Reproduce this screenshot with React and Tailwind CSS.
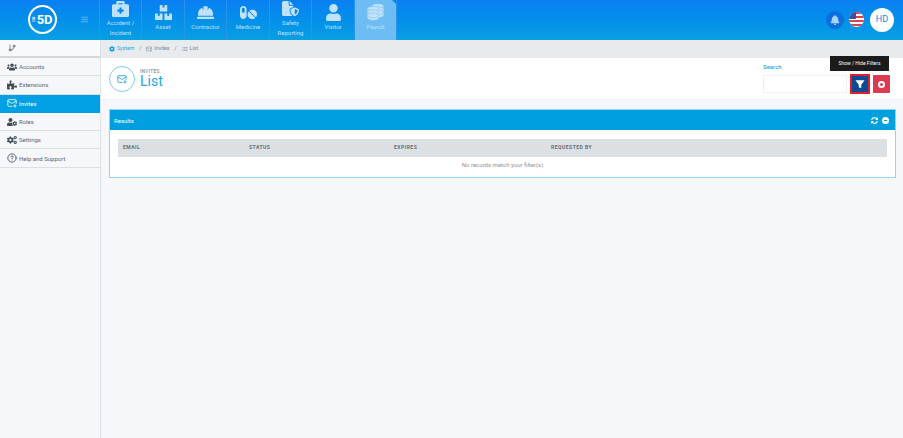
import { FaBriefcaseMedical, FaBoxes, FaHardHat, FaPills, FaUser, FaBell, FaUsers, FaPuzzlePiece, FaUserCog, FaCogs, FaSyncAlt, FaCog } from 'react-icons/fa';
import { FaFileShield } from 'react-icons/fa6';
import { LuMailPlus, LuCircleHelp, LuGitBranch, LuList, LuMenu } from 'react-icons/lu';

function CoinStacks({ className }) {
  const coin = (cx, cy, key) => (
    <g key={key}>
      <path d={`M${cx - 6} ${cy}v2.6c0 1.5 2.7 2.6 6 2.6s6-1.1 6-2.6V${cy}z`} />
      <ellipse cx={cx} cy={cy} rx="6" ry="2.5" stroke="#7cc3f5" strokeWidth="0.6" />
    </g>
  );
  return (
    <svg viewBox="0 0 18 18" width="17" height="17" fill="currentColor" className={className}>
      {[[11.5, 2, 'a'], [11.5, 5.5, 'b'], [11.5, 9, 'c']].map(([x, y, k]) => coin(x, y, k))}
      {[[6.5, 5, 'd'], [6.5, 8.5, 'e'], [6.5, 12, 'f']].map(([x, y, k]) => coin(x, y, k))}
    </svg>
  );
}

const modules = [
  { label: ['Accident /', 'Incident'], icon: FaBriefcaseMedical, w: 'w-[42px]' },
  { label: ['Asset'], icon: FaBoxes, w: 'w-[43px]' },
  { label: ['Contractor'], icon: FaHardHat, w: 'w-[42px]' },
  { label: ['Medicine'], icon: FaPills, w: 'w-[43px]' },
  { label: ['Safety', 'Reporting'], icon: FaFileShield, w: 'w-[42px]' },
  { label: ['Visitor'], icon: FaUser, w: 'w-[43px]' },
  { label: ['Payroll'], icon: CoinStacks, w: 'w-[42px]', active: true },
];

const menu = [
  { label: 'Accounts', icon: FaUsers },
  { label: 'Extensions', icon: FaPuzzlePiece },
  { label: 'Invites', icon: LuMailPlus, active: true },
  { label: 'Roles', icon: FaUserCog },
  { label: 'Settings', icon: FaCogs },
  { label: 'Help and Support', icon: LuCircleHelp },
];

const columns = [
  { label: 'EMAIL', w: 'w-[126px]' },
  { label: 'STATUS', w: 'w-[145px]' },
  { label: 'EXPIRES', w: 'w-[157px]' },
  { label: 'REQUESTED BY', w: 'flex-1' },
];

function UsFlag() {
  return (
    <svg width="15" height="15" viewBox="0 0 15 15" className="rounded-full">
      <rect width="15" height="15" fill="#fff" />
      <rect y="0" width="15" height="2" fill="#d8434e" />
      <rect y="4" width="15" height="2" fill="#d8434e" />
      <rect y="8" width="15" height="2" fill="#d8434e" />
      <rect y="12" width="15" height="2" fill="#d8434e" />
      <rect width="7" height="7" fill="#3f51a3" />
    </svg>
  );
}

export default function App() {
  return (
    <div className="w-[903px] h-[438px] overflow-hidden flex flex-col bg-[#f5f7fa] font-['Roboto',sans-serif] text-[#5b6670]">
      <header className="h-10 shrink-0 flex items-stretch bg-gradient-to-b from-[#0a7ff2] to-[#0a9fe2]">
        <div className="w-[100px] shrink-0 flex items-center pl-7 pr-[10px] justify-between border-r border-[#2a93ea] pb-[1px]">
          <div className="w-[29px] h-[29px] rounded-full border-2 border-white flex items-center justify-center text-white font-bold text-[13px] tracking-tight">
            <span className="text-[3px] leading-none mr-[1px] [writing-mode:vertical-rl] rotate-180">EHS</span>5D
          </div>
          <LuMenu className="text-[#7cc0f5] text-[9px]" />
        </div>
        {modules.map((m) => (
          <div
            key={m.label[0]}
            className={`${m.w} shrink-0 relative flex flex-col items-center border-r border-[#2a93ea] text-[#bfe2fb] ${m.active ? 'bg-[#6dbcf4]' : ''} ${m.label.length > 1 ? 'pt-0' : 'pt-[4px]'}`}
          >
            <m.icon className="text-[17px] shrink-0" />
            <div className="text-[6px] leading-[10px] text-center mt-[1px]">
              {m.label.map((l) => <div key={l}>{l}</div>)}
            </div>
            {m.active && <span className="absolute top-0 right-0 w-0 h-0 border-l-[4px] border-l-transparent border-t-[4px] border-t-[#0a7ff2]" />}
          </div>
        ))}
        <div className="flex-1 flex items-center justify-end gap-[5px] pr-[9px] pb-[1px]">
          <div className="w-[18px] h-[18px] rounded-full bg-[#0b6fe0] flex items-center justify-center">
            <FaBell className="text-[#a8d4fa] text-[10px]" />
          </div>
          <UsFlag />
          <div className="w-6 h-6 rounded-full bg-white flex items-center justify-center text-[#0a8cea] text-[9px] ml-[1px]">HD</div>
        </div>
      </header>

      <div className="flex-1 flex min-h-0">
        <aside className="w-[101px] shrink-0 bg-[#f5f7fa] border-r border-[#dfe3e7]">
          <div className="h-[18px] flex items-center pl-[8px] bg-[#f8f9fa] border-b-2 border-[#d5d8db] text-[#555]">
            <LuGitBranch className="text-[8px]" />
          </div>
          {menu.map((item) => (
            <div
              key={item.label}
              className={`h-[18.3px] flex items-center pl-[7px] gap-[2px] text-[6px] border-b ${item.active ? 'bg-[#00a0e3] text-white border-[#00a0e3]' : 'border-[#dcdfe2]'}`}
            >
              <item.icon className={`text-[10px] w-[10px] shrink-0 ${item.active ? 'text-white' : 'text-[#444c54]'}`} />
              {item.label}
            </div>
          ))}
        </aside>

        <main className="flex-1 min-w-0 flex flex-col">
          <div className="h-[18px] shrink-0 bg-[#e8ebee] flex items-center pl-[8px] text-[5.2px] gap-[2px] text-[#7c858d]">
            <FaCog className="text-[#0a9fe2] text-[6px]" />
            <span className="text-[#2aa5e0]">System</span>
            <span className="mx-[3px]">/</span>
            <LuMailPlus className="text-[6px]" />
            <span>Invites</span>
            <span className="mx-[3px]">/</span>
            <LuList className="text-[6px]" />
            <span>List</span>
          </div>

          <div className="h-[42px] shrink-0 bg-white border-b border-[#eceff2] flex items-center justify-between pl-[8px] pr-[13px] relative">
            <div className="flex items-center gap-[5px]">
              <div className="w-[26px] h-[26px] rounded-full border border-[#7ccdf0] flex items-center justify-center">
                <LuMailPlus className="text-[#1d9fd8] text-[10px]" />
              </div>
              <div>
                <div className="text-[5px] leading-[6px] text-[#777] tracking-[0.2px]">INVITES</div>
                <div className="text-[14px] leading-[15px] text-[#2aa5e0]">List</div>
              </div>
            </div>
            <div className="flex flex-col">
              <span className="text-[6px] leading-[8px] text-[#2aa5e0] font-medium mb-[3px]">Search</span>
              <div className="flex items-center gap-[3px]">
                <div className="w-[84px] h-[18px] bg-white border border-[#eeeff1]" />
                <div className="w-5 h-5 border-2 border-[#e01f2d] bg-[#0d4a94] flex items-center justify-center">
                  <svg viewBox="0 0 12 12" width="10" height="10" fill="#fff">
                    <path d="M0.5 1.5h11L7.5 7v4l-3-1.2V7z" />
                  </svg>
                </div>
                <div className="w-[17px] h-[18px] rounded-[1px] bg-[#dc3a52] flex items-center justify-center">
                  <div className="w-[7px] h-[7px] rounded-full bg-white flex items-center justify-center">
                    <div className="w-[3px] h-[3px] rounded-full bg-[#dc3a52]" />
                  </div>
                </div>
              </div>
            </div>
            <div className="absolute right-[14px] top-[-2px] w-[59px] h-[15px] bg-[#1b1b1b] flex items-center justify-center text-white text-[5px]">
              Show / Hide Filters
            </div>
          </div>

          <section className="mt-[9px] ml-[8px] mr-[7px] h-[69px] bg-[#8fd5f2] p-px">
            <div className="h-full bg-white">
              <div className="h-[20px] bg-[#00a0e0] flex items-center justify-between pl-[4px] pr-[6px] text-white text-[6px]">
                Results
                <div className="flex items-center gap-[4px]">
                  <FaSyncAlt className="text-[7px]" />
                  <div className="w-[7px] h-[7px] rounded-full bg-white flex items-center justify-center">
                    <div className="w-[3px] h-[1px] bg-[#00a0e0]" />
                  </div>
                </div>
              </div>
              <div className="pl-[8px] pr-[8px] pt-[9px]">
                <div className="h-[18px] bg-[#dde0e3] flex items-center pl-[5px] text-[5px] font-bold tracking-[0.5px] text-[#666e76]">
                  {columns.map((c) => <div key={c.label} className={c.w}>{c.label}</div>)}
                </div>
                <div className="text-center text-[6px] text-[#8a9299] mt-[3px]">No records match your filter(s)</div>
              </div>
            </div>
          </section>
        </main>
      </div>
    </div>
  );
}
